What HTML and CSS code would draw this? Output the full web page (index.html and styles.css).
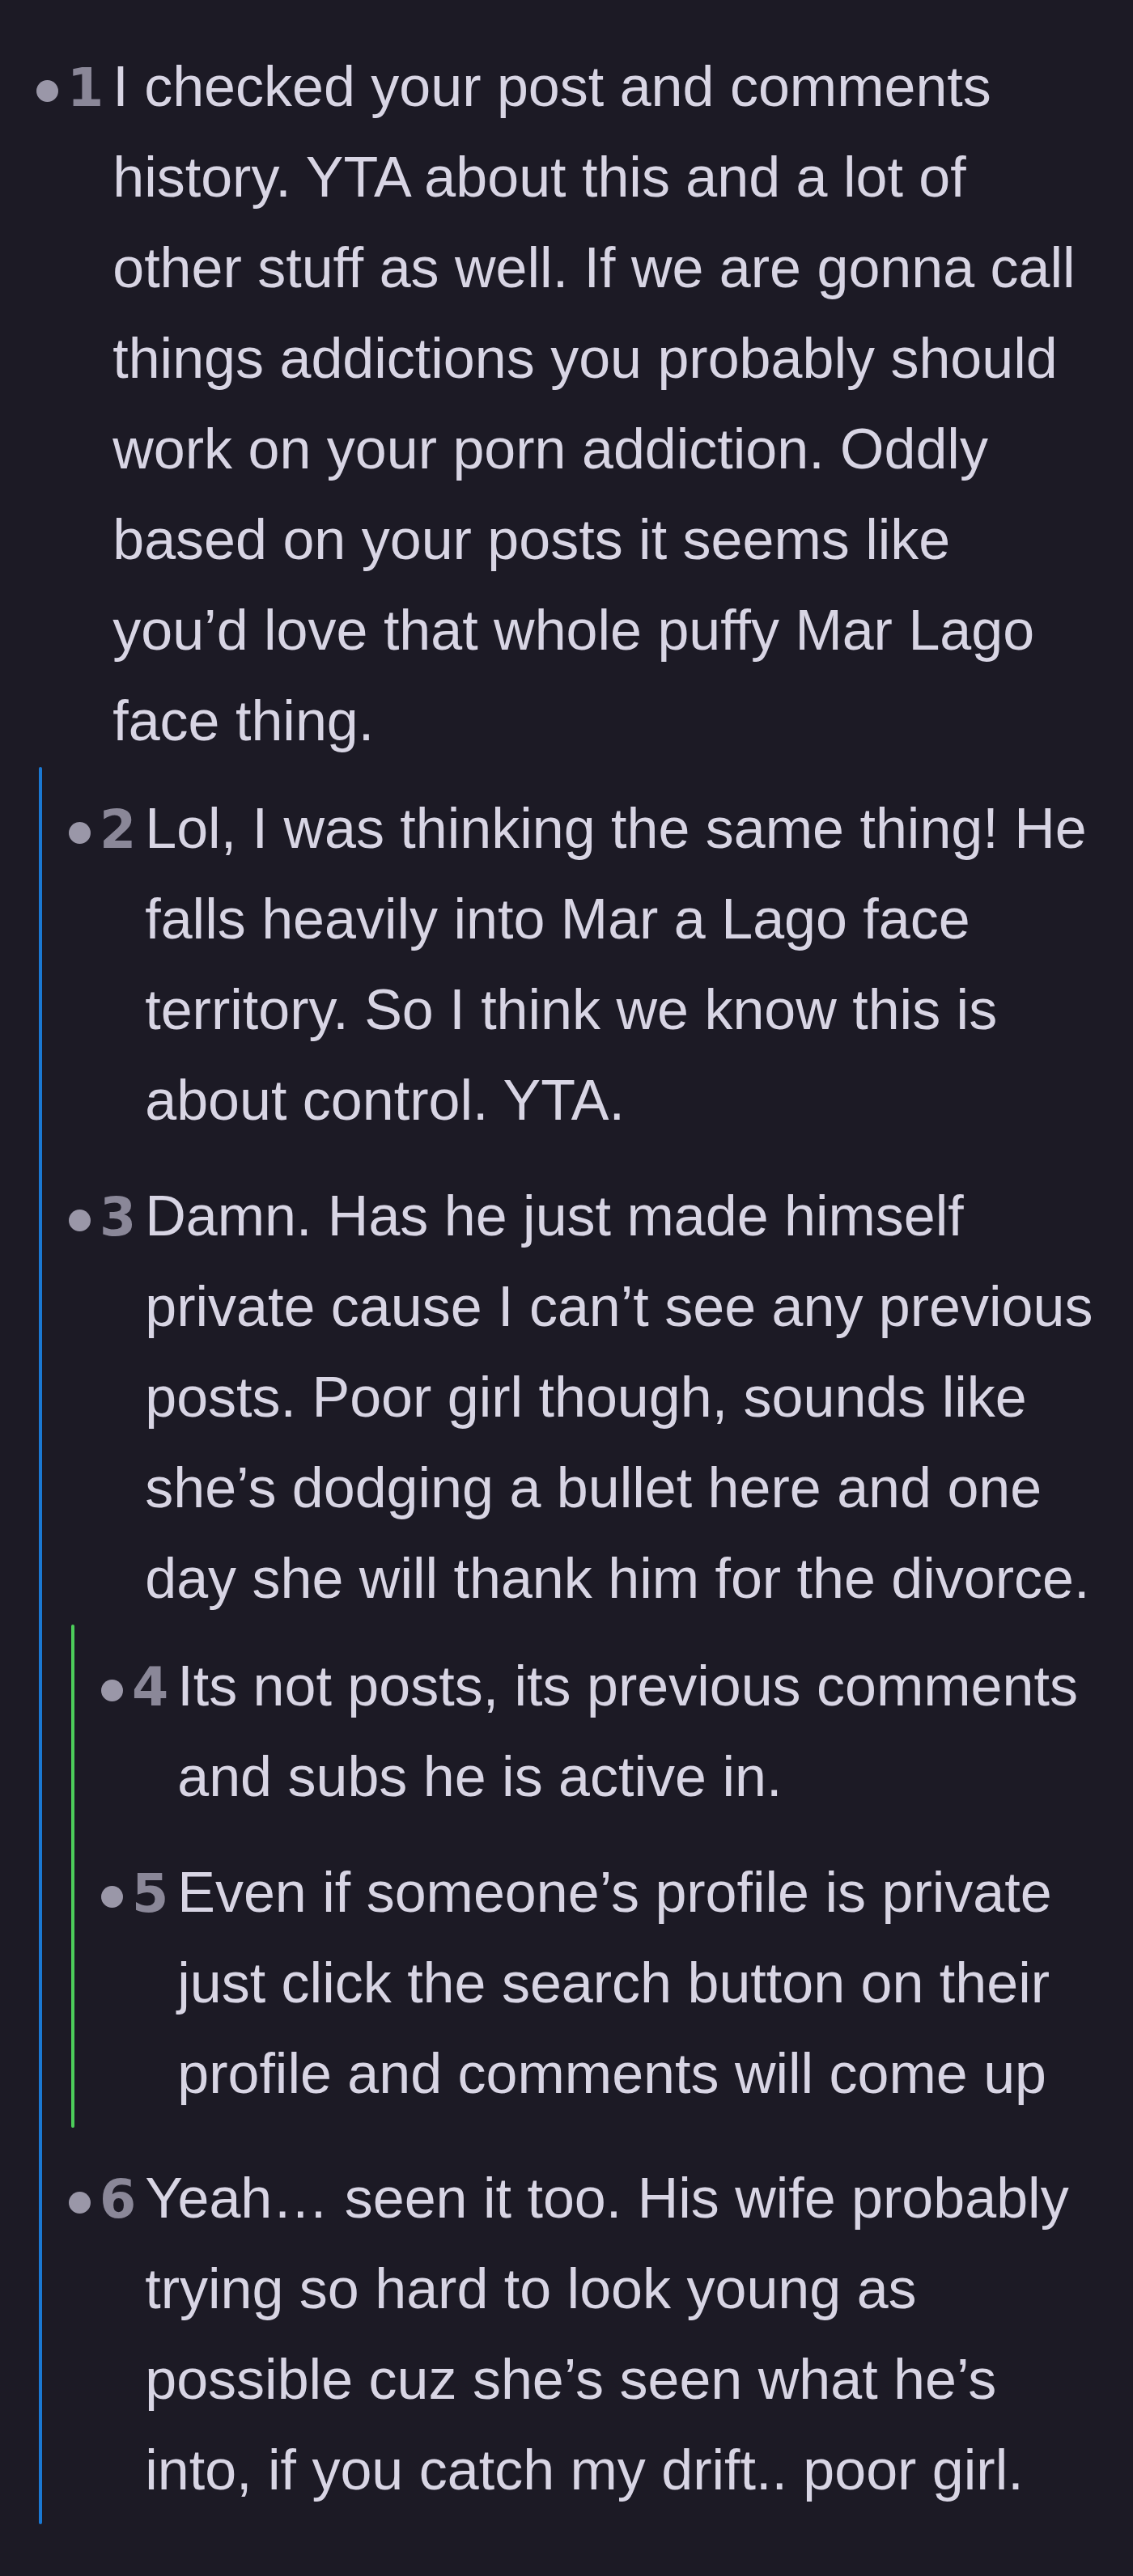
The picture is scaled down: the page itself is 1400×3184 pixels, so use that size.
FILE: index.html
```html
<!DOCTYPE html>
<html lang="en">
<head>
<meta charset="utf-8">
<title>Comment thread</title>
<link rel="stylesheet" href="styles.css">
</head>
<body>
<div class="thread">
  <div class="comment">
    <div class="row">
      <span class="dot"></span>
      <span class="num">1</span>
      <p class="text">I checked your post and comments history. YTA about this and a lot of other stuff as well. If we are gonna call things addictions you probably should work on your porn addiction. Oddly based on your posts it seems like you’d love that whole puffy Mar Lago face thing.</p>
    </div>
    <div class="children">
      <div class="rail rail-blue"></div>
      <div class="list">
        <div class="comment">
          <div class="row">
            <span class="dot"></span>
            <span class="num">2</span>
            <p class="text">Lol, I was thinking the same thing! He falls heavily into Mar a Lago face territory. So I think we know this is about control. YTA.</p>
          </div>
        </div>
        <div class="comment">
          <div class="row">
            <span class="dot"></span>
            <span class="num">3</span>
            <p class="text">Damn. Has he just made himself private cause I can’t see any previous posts. Poor girl though, sounds like she’s dodging a bullet here and one day she will thank him for the divorce.</p>
          </div>
          <div class="children">
            <div class="rail rail-green"></div>
            <div class="list">
              <div class="comment">
                <div class="row">
                  <span class="dot"></span>
                  <span class="num">4</span>
                  <p class="text">Its not posts, its previous comments and subs he is active in.</p>
                </div>
              </div>
              <div class="comment">
                <div class="row">
                  <span class="dot"></span>
                  <span class="num">5</span>
                  <p class="text">Even if someone’s profile is private just click the search button on their profile and comments will come up</p>
                </div>
              </div>
            </div>
          </div>
        </div>
        <div class="comment">
          <div class="row">
            <span class="dot"></span>
            <span class="num">6</span>
            <p class="text">Yeah… seen it too. His wife probably trying so hard to look young as possible cuz she’s seen what he’s into, if you catch my drift.. poor girl.</p>
          </div>
        </div>
      </div>
    </div>
  </div>
</div>
</body>
</html>
```

FILE: styles.css
```css
html, body {
  margin: 0;
  padding: 0;
  background: #1c1a25;
}

body {
  font-family: "Liberation Sans", Arial, sans-serif;
  color: #d8d5e4;
  min-height: 3184px;
}

.thread {
  padding: 31px 45px 0 45px;
}

.comment {
  padding: 20px 0 11px;
}

.row {
  display: flex;
  align-items: baseline;
}

.dot {
  flex: none;
  align-self: flex-start;
  width: 27px;
  height: 27px;
  margin-top: 48px;
  border-radius: 50%;
  background: #9a97a8;
}

.num {
  flex: none;
  margin-left: 11px;
  margin-right: 11px;
  font-family: "DejaVu Sans", sans-serif;
  font-size: 65px;
  line-height: 112px;
  font-weight: 700;
  color: #8a8798;
}

.text {
  flex: 1;
  margin: 0;
  font-size: 70px;
  line-height: 112px;
}

.children {
  display: flex;
  margin-top: 1px;
  margin-left: 3px;
}

.rail {
  flex: none;
  width: 4px;
  border-radius: 2px;
}

.rail-blue {
  background: #1a78d2;
}

.rail-green {
  background: #4ccd5a;
}

.list {
  flex: 1;
  min-width: 0;
  margin-left: 33px;
}
```
